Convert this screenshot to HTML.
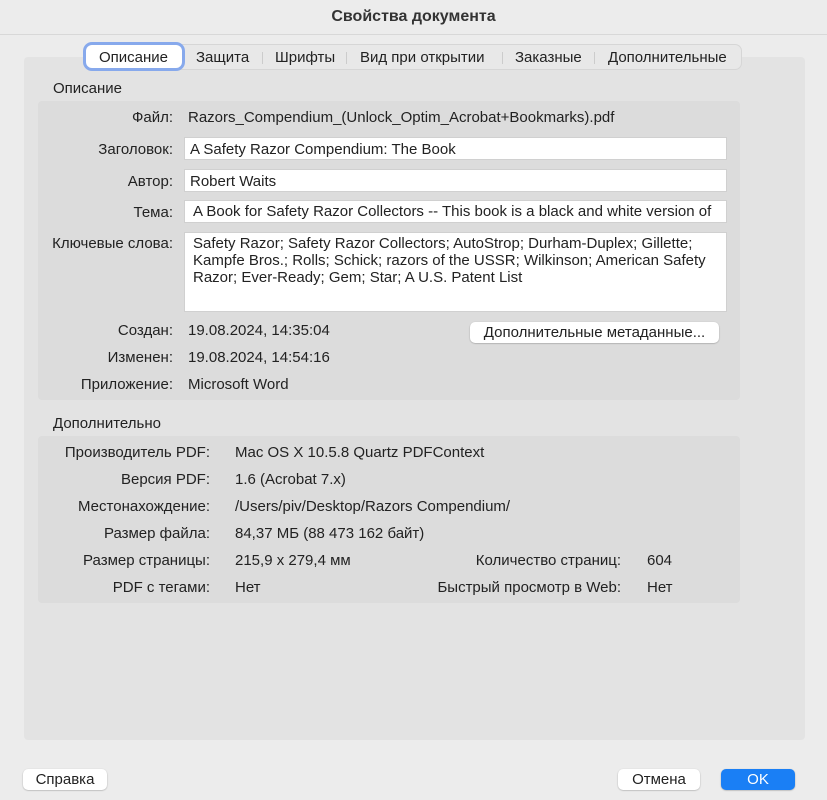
<html><head><style>
body{margin:0;width:827px;height:800px;background:#ececec;font-family:"Liberation Sans",sans-serif;font-size:15px;color:#222;position:relative;overflow:hidden}
.a{position:absolute;white-space:nowrap}
.title{left:0;width:827px;top:8px;text-align:center;font-weight:bold;font-size:16px;color:#333}
.sep{position:absolute;left:0;top:34px;width:827px;height:1px;background:#d8d8d8}
.panel{position:absolute;left:24px;top:57px;width:781px;height:683px;background:#e3e3e3;border-radius:4px}
.box{position:absolute;left:38px;width:702px;background:#dcdcdc;border-radius:4px}
.tabs{position:absolute;left:85px;top:45px;width:656px;height:24px;background:#e8e8e8;border-radius:6px;box-shadow:0 0 0 1px #d6d6d6}
.tab{position:absolute;top:4px}
.r{text-align:right}
.fld{position:absolute;background:#fff;height:21px;box-shadow:0 0 0 1px #d0d0d0}
.btn{position:absolute;background:#fff;border-radius:5px;box-shadow:0 0.5px 1.5px rgba(0,0,0,.3);text-align:center;height:21px;line-height:21px}
.vs{position:absolute;top:7px;width:1px;height:12px;background:#ccc}
</style></head><body>
<div class="a title">Свойства документа</div>
<div class="sep"></div>
<div class="panel"></div>
<div class="tabs">
<div style="position:absolute;left:1px;top:0;width:96px;height:23px;background:#fff;border-radius:6px;box-shadow:0 0 0 3px #87a9ec"></div>
<div class="tab a" style="left:14px">Описание</div>
<div class="tab a" style="left:111px">Защита</div>
<div class="vs" style="left:177px"></div>
<div class="tab a" style="left:190px">Шрифты</div>
<div class="vs" style="left:261px"></div>
<div class="tab a" style="left:275px">Вид при открытии</div>
<div class="vs" style="left:417px"></div>
<div class="tab a" style="left:430px">Заказные</div>
<div class="vs" style="left:509px"></div>
<div class="tab a" style="left:523px">Дополнительные</div>
</div>
<div class="a" style="left:53px;top:80px">Описание</div>
<div class="box" style="top:101px;height:299px"></div>
<div class="a r" style="right:654px;top:109px">Файл:</div>
<div class="a" style="left:188px;top:109px">Razors_Compendium_(Unlock_Optim_Acrobat+Bookmarks).pdf</div>
<div class="a r" style="right:654px;top:141px">Заголовок:</div>
<div class="fld" style="left:185px;top:138px;width:541px"></div>
<div class="a" style="left:190px;top:141px">A Safety Razor Compendium: The Book</div>
<div class="a r" style="right:654px;top:173px">Автор:</div>
<div class="fld" style="left:185px;top:170px;width:541px"></div>
<div class="a" style="left:190px;top:173px">Robert Waits</div>
<div class="a r" style="right:654px;top:204px">Тема:</div>
<div class="fld" style="left:185px;top:201px;width:541px;overflow:hidden"><div class="a" style="left:8px;top:2px">A Book for Safety Razor Collectors -- This book is a black and white version of</div></div>
<div class="a r" style="right:654px;top:235px">Ключевые слова:</div>
<div class="fld" style="left:185px;top:233px;width:541px;height:78px"></div>
<div class="a" style="left:193px;top:235px;line-height:17px">Safety Razor; Safety Razor Collectors; AutoStrop; Durham-Duplex; Gillette;<br>Kampfe Bros.; Rolls; Schick; razors of the USSR; Wilkinson; American Safety<br>Razor; Ever-Ready; Gem; Star; A U.S. Patent List</div>
<div class="a r" style="right:654px;top:322px">Создан:</div>
<div class="a" style="left:188px;top:322px">19.08.2024, 14:35:04</div>
<div class="btn" style="left:470px;top:322px;width:249px">Дополнительные метаданные...</div>
<div class="a r" style="right:654px;top:349px">Изменен:</div>
<div class="a" style="left:188px;top:349px">19.08.2024, 14:54:16</div>
<div class="a r" style="right:654px;top:376px">Приложение:</div>
<div class="a" style="left:188px;top:376px">Microsoft Word</div>
<div class="a" style="left:53px;top:415px">Дополнительно</div>
<div class="box" style="top:436px;height:167px"></div>
<div class="a r" style="right:617px;top:444px">Производитель PDF:</div>
<div class="a" style="left:235px;top:444px">Mac OS X 10.5.8 Quartz PDFContext</div>
<div class="a r" style="right:617px;top:471px">Версия PDF:</div>
<div class="a" style="left:235px;top:471px">1.6 (Acrobat 7.x)</div>
<div class="a r" style="right:617px;top:498px">Местонахождение:</div>
<div class="a" style="left:235px;top:498px">/Users/piv/Desktop/Razors Compendium/</div>
<div class="a r" style="right:617px;top:525px">Размер файла:</div>
<div class="a" style="left:235px;top:525px">84,37 МБ (88 473 162 байт)</div>
<div class="a r" style="right:617px;top:552px">Размер страницы:</div>
<div class="a" style="left:235px;top:552px">215,9 x 279,4 мм</div>
<div class="a r" style="right:206px;top:552px">Количество страниц:</div>
<div class="a" style="left:647px;top:552px">604</div>
<div class="a r" style="right:617px;top:579px">PDF с тегами:</div>
<div class="a" style="left:235px;top:579px">Нет</div>
<div class="a r" style="right:206px;top:579px">Быстрый просмотр в Web:</div>
<div class="a" style="left:647px;top:579px">Нет</div>
<div class="btn" style="left:23px;top:769px;width:84px">Справка</div>
<div class="btn" style="left:618px;top:769px;width:82px">Отмена</div>
<div class="btn" style="left:721px;top:769px;width:74px;background:#1a7ff5;color:#fff">OK</div>
</body></html>
